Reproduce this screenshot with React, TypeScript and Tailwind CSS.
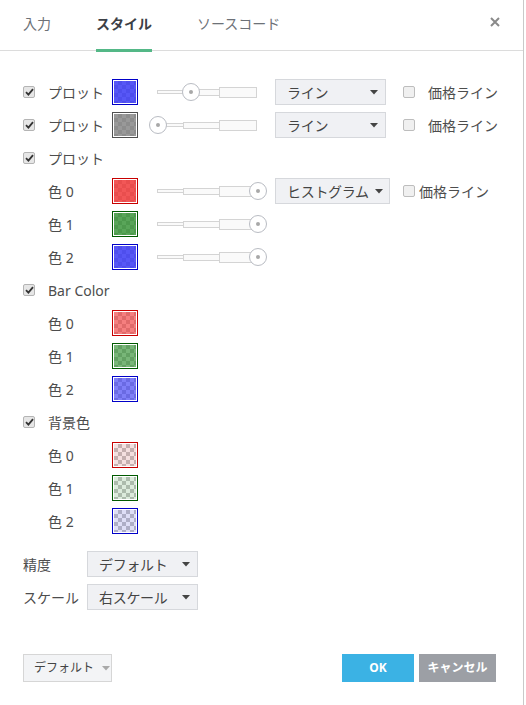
const FONT = "font-['Noto_Sans','Noto_Sans_CJK_JP',sans-serif]";

function Check() {
  return (
    <span className="flex h-[12px] w-[12px] items-center justify-center rounded-[2px] border border-[#b4b4b4] bg-[#e6e6e6]">
      <svg width="9" height="8" viewBox="0 0 9 8">
        <path d="M1 4.2 L3.4 6.6 L8 1.2" fill="none" stroke="#333" strokeWidth="1.8" />
      </svg>
    </span>
  );
}

function Box() {
  return <span className="block h-[12px] w-[12px] rounded-[2px] border border-[#bdbdbd] bg-[#f0f0f0]" />;
}

function Swatch({ border, fill }: { border: string; fill: string }) {
  return (
    <span className={`flex h-[26px] w-[26px] shrink-0 border-[1.5px] p-px bg-white ${border}`}>
      <span className="relative block flex-1 bg-[repeating-conic-gradient(#c4c4c4_0_25%,#ffffff_0_50%)] bg-size-[8px_8px]">
        <span className={`absolute inset-0 ${fill}`} />
      </span>
    </span>
  );
}

function Slider({ thumb }: { thumb: number }) {
  return (
    <div className="relative flex h-[20px] w-[119px] shrink-0 items-center pl-px">
      <span className="h-[4px] w-[27px] border border-[#d4d4d4] bg-[#fafafa]" />
      <span className="-ml-px h-[7px] w-[37px] border border-[#d4d4d4] bg-[#fafafa]" />
      <span className="-ml-px h-[11px] w-[38px] border border-[#d4d4d4] bg-[#fafafa]" />
      <span
        className="absolute top-[1px] flex h-[18px] w-[18px] items-center justify-center rounded-full border border-[#b9bcc3] bg-white"
        style={{ left: thumb - 8 }}
      >
        <span className="h-[4px] w-[4px] rounded-full bg-[#a8a8a8]" />
      </span>
    </div>
  );
}

function Arrow({ light }: { light?: boolean }) {
  return (
    <svg width="8" height="5" viewBox="0 0 8 5" className="shrink-0">
      <path d="M0 0 H8 L4 4.5 Z" fill={light ? '#a9a9a9' : '#444'} />
    </svg>
  );
}

function Select({ label, w, gap }: { label: string; w: string; gap?: boolean }) {
  return (
    <div className={`flex h-[26px] shrink-0 items-center border border-[#d6d8dc] bg-[#f0f1f4] pl-[11px] pr-[7px] ${w} ${gap ? 'gap-[6px] pl-[10px]' : 'justify-between'}`}>
      <span className="whitespace-nowrap text-[14px] tracking-[-0.3px] text-[#444]">{label}</span>
      <Arrow />
    </div>
  );
}

function PriceLine({ ml, gap }: { ml: string; gap: string }) {
  return (
    <div className={`flex shrink-0 items-center whitespace-nowrap ${ml} ${gap}`}>
      <Box />
      <span>価格ライン</span>
    </div>
  );
}

function Row({ children }: { children: React.ReactNode }) {
  return <div className="flex h-[26px] items-center">{children}</div>;
}

function Header({ label }: { label: string }) {
  return (
    <Row>
      <span className="w-[25px]">
        <Check />
      </span>
      <span>{label}</span>
    </Row>
  );
}

function ColorRow({ n, border, fill, slider }: { n: number; border: string; fill: string; slider?: boolean }) {
  return (
    <Row>
      <span className="w-[89px] pl-[25px]">色 {n}</span>
      <Swatch border={border} fill={fill} />
      {slider && (
        <div className="ml-[18px]">
          <Slider thumb={101} />
        </div>
      )}
      {slider && n === 0 && (
        <>
          <Select label="ヒストグラム" w="w-[115px]" gap />
          <PriceLine ml="ml-[13px]" gap="gap-[4px]" />
        </>
      )}
    </Row>
  );
}

export default function App() {
  return (
    <div className={`h-[705px] w-[524px] border-r border-[#c9c9c9] bg-white text-[14px] text-[#4d4d4d] ${FONT}`}>
      {/* tabs */}
      <div className="flex h-[51px] items-stretch border-b border-[#dcdcdc] pl-[23px] pr-[23px]">
        <div className="flex items-center pb-[4px] text-[14px] text-[#6d7177]">入力</div>
        <div className="relative ml-[45px] flex items-center pb-[4px] text-[14px] font-bold text-[#3c4046]">
          スタイル
          <span className="absolute -bottom-[2px] left-0 right-0 h-[3px] bg-[#54b887]" />
        </div>
        <div className="ml-[45px] flex items-center pb-[4px] text-[14px] text-[#6d7177]">ソースコード</div>
        <div className="ml-auto flex items-center pb-[6px]">
          <svg width="10" height="10" viewBox="0 0 10 10">
            <path d="M1 1 L9 9 M9 1 L1 9" stroke="#8a8a8a" strokeWidth="2" />
          </svg>
        </div>
      </div>

      {/* body */}
      <div className="flex flex-col gap-[7px] pl-[23px] pt-[28px]">
        <Row>
          <span className="w-[25px]">
            <Check />
          </span>
          <span className="w-[64px]">プロット</span>
          <Swatch border="border-[#0000c8]" fill="bg-[#3a3af5]/85" />
          <div className="ml-[18px]">
            <Slider thumb={34} />
          </div>
          <Select label="ライン" w="w-[111px]" />
          <PriceLine ml="ml-[17px]" gap="gap-[13px]" />
        </Row>
        <Row>
          <span className="w-[25px]">
            <Check />
          </span>
          <span className="w-[64px]">プロット</span>
          <Swatch border="border-[#505050]" fill="bg-[#808080]/80" />
          <div className="ml-[18px]">
            <Slider thumb={1} />
          </div>
          <Select label="ライン" w="w-[111px]" />
          <PriceLine ml="ml-[17px]" gap="gap-[13px]" />
        </Row>

        <Header label="プロット" />
        <ColorRow n={0} border="border-[#c80000]" fill="bg-[#f03a3a]/85" slider />
        <ColorRow n={1} border="border-[#005a00]" fill="bg-[#2f8f2f]/80" slider />
        <ColorRow n={2} border="border-[#0000c8]" fill="bg-[#3a3af5]/85" slider />

        <Header label="Bar Color" />
        <ColorRow n={0} border="border-[#c80000]" fill="bg-[#f03a3a]/65" />
        <ColorRow n={1} border="border-[#005a00]" fill="bg-[#2f8f2f]/65" />
        <ColorRow n={2} border="border-[#0000c8]" fill="bg-[#3a3af5]/65" />

        <Header label="背景色" />
        <ColorRow n={0} border="border-[#c80000]" fill="bg-[#c86060]/20" />
        <ColorRow n={1} border="border-[#005a00]" fill="bg-[#4f9a4f]/20" />
        <ColorRow n={2} border="border-[#0000c8]" fill="bg-[#5a5ad0]/20" />

        <div className="mt-[10px] flex flex-col gap-[7px]">
          <Row>
            <span className="w-[64px]">精度</span>
            <Select label="デフォルト" w="w-[111px]" />
          </Row>
          <Row>
            <span className="w-[64px]">スケール</span>
            <Select label="右スケール" w="w-[111px]" />
          </Row>
        </div>
      </div>

      {/* footer */}
      <div className="mt-[44px] flex items-center pl-[23px] pr-[27px]">
        <div className="flex h-[28px] w-[89px] items-center gap-[8px] border border-[#d6d6d6] bg-[#f3f4f6] pl-[10px]">
          <span className="whitespace-nowrap text-[12px] text-[#444]">デフォルト</span>
          <Arrow light />
        </div>
        <div className="ml-auto flex gap-[5px]">
          <div className="flex h-[28px] w-[72px] items-center justify-center bg-[#3bb2e4] text-[12px] font-bold text-white">OK</div>
          <div className="flex h-[28px] w-[77px] items-center justify-center bg-[#9c9fa5] text-[12px] font-bold text-white">キャンセル</div>
        </div>
      </div>
    </div>
  );
}
